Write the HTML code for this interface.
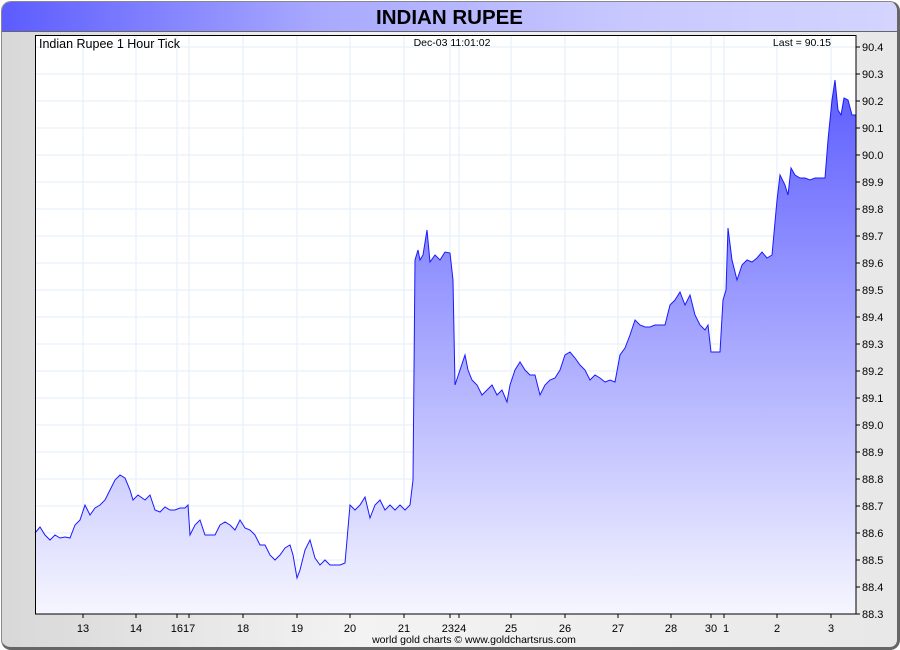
<!DOCTYPE html><html><head><style>
body{margin:0;width:900px;height:650px;overflow:hidden;background:#fff;font-family:"Liberation Sans",sans-serif}
#f{position:absolute;left:1px;top:1px;width:895px;height:645px;border:1px solid #888;border-right:3px solid #666;border-bottom:3px solid #666;border-radius:10px;background:linear-gradient(90deg,#d8d8d8,#f3f3f3 40%,#e8e8e8);overflow:hidden}
#t{position:absolute;left:0;top:0;right:0;height:29px;background:linear-gradient(90deg,#5c5cff,#a8a8ff 35%,#c8c8ff 70%,#d4d4ff);border-bottom:1px solid #666;text-align:center;font-weight:bold;font-size:20.5px;line-height:32px;color:#000}
</style></head><body><div id="f"><div id="t">INDIAN RUPEE</div></div>
<svg style="position:absolute;left:0;top:0" width="900" height="650" font-family="Liberation Sans,sans-serif" font-size="11">
<defs><linearGradient id="g" x1="0" y1="80" x2="0" y2="614" gradientUnits="userSpaceOnUse"><stop offset="0" stop-color="#5c5cff"/><stop offset="1" stop-color="#f6f6ff"/></linearGradient></defs>
<rect x="35" y="35" width="821" height="579" fill="#fff"/>
<g stroke="#e3eef8" stroke-width="1">
<path d="M35 47H856M35 74H856M35 101H856M35 128H856M35 155H856M35 182H856M35 209H856M35 236H856M35 263H856M35 290H856M35 317H856M35 344H856M35 371H856M35 398H856M35 425H856M35 452H856M35 479H856M35 506H856M35 533H856M35 560H856M35 587H856"/>
<path d="M83 35V614M136 35V614M177 35V614M189 35V614M243 35V614M297 35V614M350 35V614M404 35V614M450 35V614M459 35V614M511 35V614M565 35V614M618 35V614M671 35V614M711 35V614M724 35V614M777 35V614M831 35V614"/>
</g>
<path fill="url(#g)" stroke="none" d="M35 614L35 533L40 527L45 535L50 540L55 535L60 538L65 537L70 538L75 525L80 520L85 505L90 515L95 508L100 505L105 500L110 490L115 480L120 475L125 478L130 490L133 500L138 495L145 500L150 495L155 510L160 512L165 507L170 510L175 510L180 508L185 508L188 505L190 535L195 525L200 520L205 535L210 535L215 535L220 525L225 522L230 525L235 530L240 520L245 528L250 530L255 535L260 545L265 545L270 555L275 560L280 555L285 548L290 545L293 555L297 578L300 570L305 550L310 540L315 558L320 565L325 560L330 565L335 565L340 565L345 563L350 505L355 510L360 505L365 497L370 518L375 505L380 500L385 510L390 505L395 510L400 505L405 510L410 505L413 480L415 260L418 250L420 260L423 255L427 230L430 262L435 255L440 260L445 252L450 253L453 280L455 385L460 370L465 355L468 370L472 380L477 385L482 395L487 390L492 385L497 395L502 390L507 402L510 385L515 370L520 362L525 370L530 375L535 375L540 395L545 385L550 380L555 378L560 370L565 355L570 352L575 358L580 365L585 370L590 380L595 375L600 378L605 382L610 380L615 382L620 355L625 348L630 335L635 320L640 325L645 327L650 327L655 325L660 325L665 325L670 305L675 300L680 292L685 305L690 295L695 315L700 325L705 330L708 325L711 352L715 352L720 352L723 300L726 290L728 228L732 260L737 280L742 265L747 260L752 262L757 258L762 252L767 258L772 255L777 200L780 175L785 185L788 195L791 168L795 175L800 178L805 178L810 180L815 178L820 178L825 178L828 140L832 100L835 80L838 110L841 115L844 98L848 100L852 115L855 115L856 116L856 614Z"/>
<path fill="none" stroke="#1a1aff" stroke-width="1" d="M35 533L40 527L45 535L50 540L55 535L60 538L65 537L70 538L75 525L80 520L85 505L90 515L95 508L100 505L105 500L110 490L115 480L120 475L125 478L130 490L133 500L138 495L145 500L150 495L155 510L160 512L165 507L170 510L175 510L180 508L185 508L188 505L190 535L195 525L200 520L205 535L210 535L215 535L220 525L225 522L230 525L235 530L240 520L245 528L250 530L255 535L260 545L265 545L270 555L275 560L280 555L285 548L290 545L293 555L297 578L300 570L305 550L310 540L315 558L320 565L325 560L330 565L335 565L340 565L345 563L350 505L355 510L360 505L365 497L370 518L375 505L380 500L385 510L390 505L395 510L400 505L405 510L410 505L413 480L415 260L418 250L420 260L423 255L427 230L430 262L435 255L440 260L445 252L450 253L453 280L455 385L460 370L465 355L468 370L472 380L477 385L482 395L487 390L492 385L497 395L502 390L507 402L510 385L515 370L520 362L525 370L530 375L535 375L540 395L545 385L550 380L555 378L560 370L565 355L570 352L575 358L580 365L585 370L590 380L595 375L600 378L605 382L610 380L615 382L620 355L625 348L630 335L635 320L640 325L645 327L650 327L655 325L660 325L665 325L670 305L675 300L680 292L685 305L690 295L695 315L700 325L705 330L708 325L711 352L715 352L720 352L723 300L726 290L728 228L732 260L737 280L742 265L747 260L752 262L757 258L762 252L767 258L772 255L777 200L780 175L785 185L788 195L791 168L795 175L800 178L805 178L810 180L815 178L820 178L825 178L828 140L832 100L835 80L838 110L841 115L844 98L848 100L852 115L855 115L856 116"/>
<rect x="35.5" y="35.5" width="820.5" height="578.5" fill="none" stroke="#000"/>
<g stroke="#000"><path d="M856 47h4M856 74h4M856 101h4M856 128h4M856 155h4M856 182h4M856 209h4M856 236h4M856 263h4M856 290h4M856 317h4M856 344h4M856 371h4M856 398h4M856 425h4M856 452h4M856 479h4M856 506h4M856 533h4M856 560h4M856 587h4M856 614h4"/>
<path d="M83 614v4M136 614v4M177 614v4M189 614v4M243 614v4M297 614v4M350 614v4M404 614v4M450 614v4M459 614v4M511 614v4M565 614v4M618 614v4M671 614v4M711 614v4M724 614v4M777 614v4M831 614v4"/></g>
<g fill="#000"><text x="862" y="51">90.4</text><text x="862" y="78">90.3</text><text x="862" y="105">90.2</text><text x="862" y="132">90.1</text><text x="862" y="159">90.0</text><text x="862" y="186">89.9</text><text x="862" y="213">89.8</text><text x="862" y="240">89.7</text><text x="862" y="267">89.6</text><text x="862" y="294">89.5</text><text x="862" y="321">89.4</text><text x="862" y="348">89.3</text><text x="862" y="375">89.2</text><text x="862" y="402">89.1</text><text x="862" y="429">89.0</text><text x="862" y="456">88.9</text><text x="862" y="483">88.8</text><text x="862" y="510">88.7</text><text x="862" y="537">88.6</text><text x="862" y="564">88.5</text><text x="862" y="591">88.4</text><text x="862" y="618">88.3</text>
<g text-anchor="middle"><text x="83" y="632">13</text><text x="136" y="632">14</text><text x="183" y="632">1617</text><text x="243" y="632">18</text><text x="297" y="632">19</text><text x="350" y="632">20</text><text x="404" y="632">21</text><text x="454" y="632">2324</text><text x="511" y="632">25</text><text x="565" y="632">26</text><text x="618" y="632">27</text><text x="671" y="632">28</text><text x="711" y="632">30</text><text x="726" y="632">1</text><text x="777" y="632">2</text><text x="831" y="632">3</text>
<text x="474" y="643" font-size="10.5">world gold charts © www.goldchartsrus.com</text>
<text x="452" y="46" font-size="10.5">Dec-03  11:01:02</text></g>
<text x="39" y="48" font-size="12.5">Indian Rupee 1 Hour Tick</text>
<text x="831" y="46" font-size="10.5" text-anchor="end">Last = 90.15</text></g>
</svg></body></html>
